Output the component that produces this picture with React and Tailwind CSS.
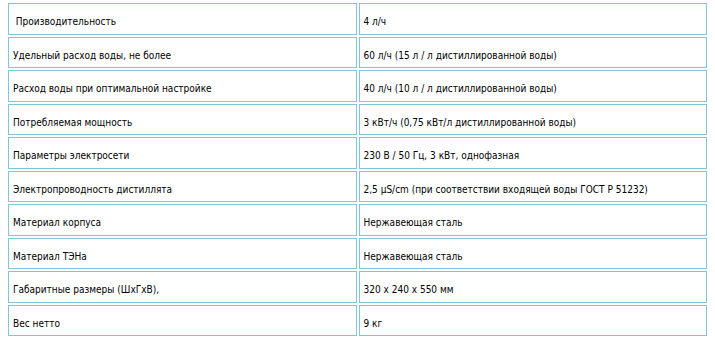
import React from "react";

const rows = [
  ["\u00a0Производительность", "4 л/ч"],
  ["Удельный расход воды, не более", "60 л/ч (15 л / л дистиллированной воды)"],
  ["Расход воды при оптимальной настройке", "40 л/ч (10 л / л дистиллированной воды)"],
  ["Потребляемая мощность", "3 кВт/ч (0,75 кВт/л дистиллированной воды)"],
  ["Параметры электросети", "230 В / 50 Гц, 3 кВт, однофазная"],
  ["Электропроводность дистиллята", "2,5 μS/cm (при соответствии входящей воды ГОСТ Р 51232)"],
  ["Материал корпуса", "Нержавеющая сталь"],
  ["Материал ТЭНа", "Нержавеющая сталь"],
  ["Габаритные размеры (ШхГхВ),", "320 x 240 x 550 мм"],
  ["Вес нетто", "9 кг"],
];

const App = () => {
  return (
    <div className="w-[715px] h-[345px] bg-white overflow-hidden font-['DejaVu_Sans_Condensed','DejaVu_Sans',sans-serif] text-[10px] leading-[14px] text-black">
      <table className="ml-[6px] mt-[1px] w-[703px] table-fixed border-separate border-spacing-[2px]">
        <tbody>
          {rows.map(([name, value], i) => (
            <tr key={i}>
              <td className="h-[31.5px] border border-[#80c6d8] pl-[4px] pt-[11px] pb-[4px] align-top whitespace-nowrap">
                {name}
              </td>
              <td className="h-[31.5px] border border-[#80c6d8] pl-[4px] pt-[11px] pb-[4px] align-top whitespace-nowrap">
                {value}
              </td>
            </tr>
          ))}
        </tbody>
      </table>
    </div>
  );
};

export default App;
